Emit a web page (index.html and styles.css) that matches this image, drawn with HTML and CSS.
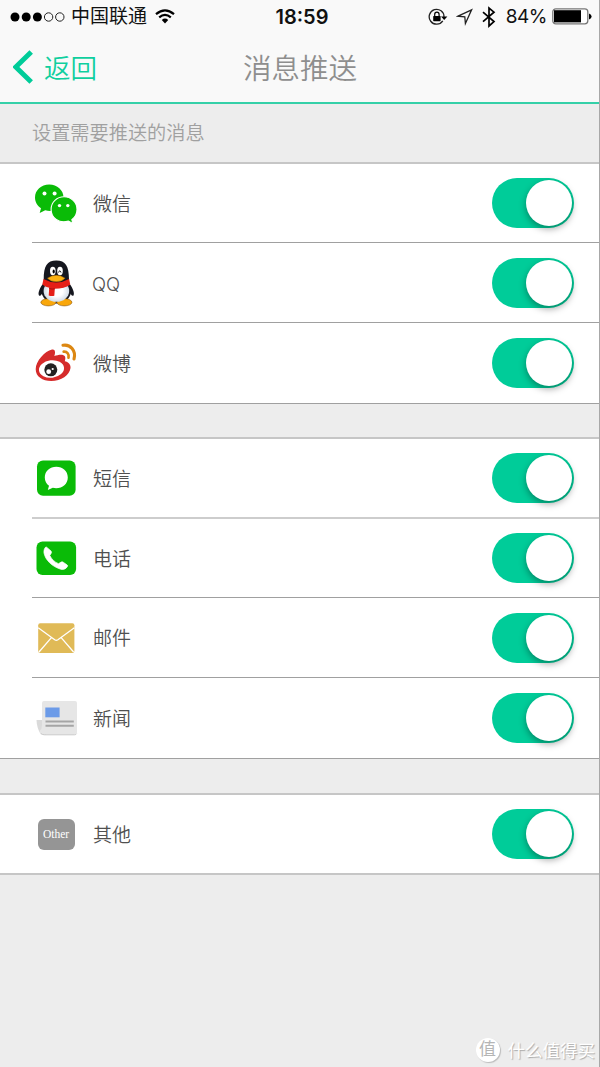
FILE: index.html
```html
<!DOCTYPE html>
<html lang="zh-CN">
<head>
<meta charset="UTF-8">
<title>消息推送</title>
<link rel="stylesheet" href="styles.css">
</head>
<body>
<div class="page">
    <div class="header">
        <div class="status">
            <div class="status-left">
                <svg class="signal" width="56" height="12" viewBox="0 0 56 12"><circle cx="5" cy="6" r="4.5"/><circle cx="16.2" cy="6" r="4.5"/><circle cx="27.4" cy="6" r="4.5"/><g fill="none" stroke="#222" stroke-width="1"><circle cx="38.6" cy="6" r="4.2"/><circle cx="49.8" cy="6" r="4.2"/></g></svg>
                <span class="carrier">中国联通</span>
                <svg class="wifi" width="20" height="15" viewBox="0 0 20 15"><g fill="none" stroke="#000" stroke-width="2.2"><path d="M1 5.2Q10-2.6 19 5.2"/><path d="M4.2 8.4Q10 3.4 15.8 8.4"/></g><path d="M6.8 11Q10 8.2 13.2 11L10 14.4z"/></svg>
            </div>
            <div class="time">18:59</div>
            <div class="status-right">
                <svg width="20" height="18" viewBox="0 0 20 18"><path d="M14.8 12.8A7.4 7.4 0 1 1 16 9" fill="none" stroke="#222" stroke-width="1.3"/><path d="M13 8.5h6.4L16.2 12z"/><rect x="5.2" y="8" width="7.4" height="5.2" rx=".6"/><path d="M6.7 8.2V6.4a2.2 2.2 0 0 1 4.4 0v1.8" fill="none" stroke="#000" stroke-width="1.2"/></svg>
                <svg class="locate" width="18" height="18" viewBox="0 0 18 18"><path d="M2 8.2L15.6 1.8L9.4 15.4L8.800 8.800z" fill="none" stroke="#222" stroke-width="1.3"/></svg>
                <svg class="bt" width="14" height="22" viewBox="0 0 14 22"><path d="M1 6.2L12 15.6L7 20V2L12 6.2L1 15.6" fill="none" stroke="#000" stroke-width="1.7"/></svg>
                <span class="percent">84%</span>
                <svg class="battery" width="40" height="17" viewBox="0 0 40 17"><rect x=".8" y=".8" width="35" height="15" rx="3" fill="#fff" stroke="#777" stroke-width="1.3"/><path d="M2 2.2h27v12.2H2z"/><path d="M37 5.500q2.600.800 2.600 3t-2.600 3z"/></svg>
            </div>
        </div>
        <div class="nav">
            <div class="back">
                <svg width="20" height="34" viewBox="0 0 20 34"><path d="M18.200 2L2.800 17L18.200 32" fill="none" stroke="#0c9" stroke-width="5"/></svg>
                <span>返回</span>
            </div>
            <h1>消息推送</h1>
        </div>
    </div>
    <div class="tip">设置需要推送的消息</div>

    <ul class="list list-social">
        <li>
            <svg class="icon" width="48" height="48" viewBox="0.800 0 48 48"><g fill="#0abb07"><path d="M18 5.600c-8 0-14.200 5.600-14.200 13 0 4.800 2.400 8.300 6 10.600L8.500 34l5.500-2.800c9.700 2.800 18.300-3.200 18.300-12.600 0-7.400-6.300-13-14.300-13z"/><path d="M32.800 17.800c-7 0-12.900 5.400-12.900 12.600 0 8.400 8 14.600 17.300 11.700l4.400 2.300-1-3.800c3.200-2.300 5.200-5.900 5.200-10.200 0-7.200-6-12.600-13-12.600z" stroke="#fff" stroke-width="1.1"/></g><g fill="#fff"><circle cx="13.300" cy="14.600" r="2"/><circle cx="23.400" cy="14.600" r="2"/><circle cx="28.300" cy="26.600" r="1.700"/><circle cx="36.600" cy="26.600" r="1.700"/></g></svg>
            <span>微信</span><i class="switch"></i>
        </li>
        <li>
            <svg class="icon" width="48" height="48" viewBox="0 0 48 48">
                <defs><radialGradient id="belly"><stop offset=".5" stop-color="#fff"/><stop offset="1" stop-color="#d3dde8"/></radialGradient></defs>
                <path d="M12.500 23C8 28 5.500 34 7 36.400c1.300 1.400 3-1.200 4.500-4.400M36 23c4.500 5 7 11 5.500 13.400-1.300 1.400-3-1.200-4.500-4.400" fill="#15171f"/>
                <ellipse cx="24.300" cy="31.500" rx="15" ry="13" fill="#15171f"/>
                <ellipse cx="16.400" cy="43.300" rx="7.500" ry="3.600" fill="#f9a70b" stroke="#8b5509" stroke-width=".6"/>
                <ellipse cx="32.400" cy="43.300" rx="7.500" ry="3.600" fill="#f9a70b" stroke="#8b5509" stroke-width=".6"/>
                <ellipse cx="24.400" cy="32" rx="12.800" ry="10.800" fill="url(#belly)"/>
                <path d="M11.700 20.500C11.700 7 15 1.500 24.300 1.500S37 7 37 20.500c0 6-5 8.500-12.700 8.500s-12.600-2.500-12.600-8.500z" fill="#15171f"/>
                <ellipse cx="20.800" cy="12" rx="2.800" ry="4.200" fill="#fff"/><ellipse cx="28" cy="12" rx="2.800" ry="4.200" fill="#fff"/>
                <ellipse cx="21.700" cy="12.500" rx="1.100" ry="1.900"/><path d="M26.600 13.500q1.200-3.500 2.400 0" fill="none" stroke="#111"/>
                <path d="M11.500 20q12.700 7 25.600 0l1.200 5.500q-6 4.300-15.500 4.300l-.5 7q-3 .7-5.600-.4l.5-7.600q-4.300-1-6.900-3.300z" fill="#e51f17"/><path d="M17.200 29.500q3 .9 5.600.3" fill="none" stroke="#a81212"/>
                <path d="M15.500 19.200q4-2.900 8.800-2.900t8.800 2.900q-3.300 3.500-8.800 3.500t-8.800-3.500z" fill="#fcb312" stroke="#a56508" stroke-width=".5"/>
            </svg>
            <span class="latin">QQ</span><i class="switch"></i>
        </li>
        <li>
            <svg class="icon" width="48" height="48" viewBox="0.500 0 48 48"><path d="M20.500 10.500c3.300-.8 3.700 3 2.300 6.600 4.300-1.700 9.500-2.200 10.700.4.700 1.500.2 3.200-.2 4.700 3.300.8 6.200 3 5.700 6.800C38.200 36 29.600 42 19.700 42 11 42 4.200 37.400 4.200 30.200c0-8 9.200-18.200 16.300-19.700z" fill="#d52b2b"/><ellipse cx="20" cy="30" rx="12.600" ry="8.700" transform="rotate(-7 20 30)" fill="#fff"/><circle cx="19.300" cy="30.800" r="6.500" fill="#222"/><circle cx="17.200" cy="32.700" r="2.400" fill="#fff"/><circle cx="21.200" cy="30" r="1.100" fill="#fff"/><g fill="none" stroke="#dc8712" stroke-linecap="round" stroke-width="3.100"><path d="M31.500 6.300c7.300-1.300 13.300 5.500 11 13.700"/><path d="M32.200 12.700c3.400-.3 5.600 2.500 4.800 6" stroke-width="2.700"/></g></svg>
            <span>微博</span><i class="switch"></i>
        </li>
    </ul>

    <ul class="list list-system">
        <li>
            <svg class="icon" width="48" height="48" viewBox="0 0 48 48"><rect x="5" y="6.500" width="38.600" height="35.200" rx="6" fill="#0abb07"/><path d="M24.300 12.800c-6.400 0-11.500 4.500-11.500 10.600 0 3.400 1.600 6.300 4.200 8.300L15.800 36l5-2.200c8 1.800 15-3 15-10.400 0-6.100-5.100-10.600-11.500-10.600z" fill="#fff"/></svg>
            <span>短信</span><i class="switch"></i>
        </li>
        <li>
            <svg class="icon" width="48" height="48" viewBox="0 0 48 48"><rect x="4.500" y="7.500" width="39.600" height="33.600" rx="6" fill="#0abb07"/><path d="M14.600 13.200L19 17q1 1.200.1 2.400l-1.300 2c1.700 3.800 5 6.800 8.700 8.300l2.600-1.600q1.100-.7 2.100.1l4 2.800q.8.800.1 1.700c-1.500 2.300-3.800 3.300-6.600 2.500C20.200 32.700 13.300 26 12 19c-.3-2.500.4-4.500 1.500-5.700q.5-.5 1.100-.1z" fill="#fff" stroke="#fff" stroke-width=".7"/></svg>
            <span>电话</span><i class="switch"></i>
        </li>
        <li>
            <svg class="icon" width="48" height="48" viewBox="0 0 48 48"><rect x="6.200" y="9.300" width="36.200" height="29.800" rx="2" fill="#e0ba57"/><path d="M6.200 13.800l16.500 12q1.600 1 3.200 0l16.500-12M7 38l12.200-14.200M41.600 38L29.400 23.800" fill="none" stroke="#fff" stroke-width="1.300"/></svg>
            <span>邮件</span><i class="switch"></i>
        </li>
        <li>
            <svg class="icon" width="48" height="48" viewBox="0 0 48 48"><path d="M10 26H4.500q.3 8 4.200 14.200L14 41z" fill="#dadada"/><path d="M12 7h31q2 0 2 2v29.500q0 2-2 2H12q-4 0-4.500-3.500Q10 35 10 31V9q0-2 2-2z" fill="#e6e6e6"/><path d="M9 39.500q1.300 1.300 3.500 1.300h30q1.500 0 2-1" fill="none" stroke="#c9c9c9"/><path d="M13.300 13.500h14.300v9.800H13.300z" fill="#6c9be8"/><path d="M13.500 27.400h28.300M13.500 31.700h28.300" stroke="#a5a5a5" stroke-width="2"/></svg>
            <span>新闻</span><i class="switch"></i>
        </li>
    </ul>

    <ul class="list list-other">
        <li>
            <div class="icon"><b class="other">Other</b></div>
            <span>其他</span><i class="switch"></i>
        </li>
    </ul>

    <div class="mark"><b>值</b><span>什么值得买</span></div>
</div>
</body>
</html>
```

FILE: styles.css
```css
*{margin:0;padding:0;box-sizing:border-box;}
body{
	background:#ededed;
	font-family:"Liberation Sans","Noto Sans CJK SC",sans-serif;
}
ul{list-style:none;}
svg{display:block;flex:none;}
.page{
	position:relative;
	width:600px;
	height:1067px;
	overflow:hidden;
	border-right:1px solid #a8a8a8;
	background:#ededed;
}
.header{
	height:104px;
	background:#f9f9f9;
	border-bottom:2px solid #35d0a8;
}
.status{
	display:grid;
	grid-template-columns:230px 1fr 230px;
	align-items:center;
	height:33px;
	padding:0 7px 0 10px;
	color:#111;
}
.status-left,.status-right{display:flex;align-items:center;}
.status-right{justify-content:flex-end;}
.carrier{margin-left:5px;padding-top:1px;font-size:19px;line-height:32px;}
.wifi{margin-left:8px;}
.time{
	padding:1px 0 0 2px;
	text-align:center;
	font:600 20px/32px Inter,sans-serif;
}
.locate{margin-left:8px;}
.bt{margin-left:8px;}
.percent{
	margin:0 5px 0 10px;
	padding-top:1px;
	font:400 19px/32px Inter,sans-serif;
	letter-spacing:-.5px;
}
.nav{
	display:grid;
	grid-template-columns:200px 200px 200px;
	align-items:center;
	height:68px;
}
.back{
	display:flex;
	align-items:center;
	padding-left:13px;
	color:#0fcf9f;
	font-size:26.500px;
	font-weight:350;
}
.back span{margin:-2px 0 0 11px;}
h1{
	margin-top:-2px;
	text-align:center;
	color:#8e8e8e;
	font-size:28.500px;
	font-weight:350;
}
.tip{
	height:58px;
	padding-left:32px;
	color:#a0a0a0;
	font-size:19.200px;
	font-weight:350;
	line-height:59px;
}
.list{
	display:grid;
	background:#fff;
	border-top:2px solid #c6c6c6;
	border-bottom:1px solid #a0a0a0;
}
.list li{
	display:flex;
	align-items:center;
	margin-left:32px;
	padding-right:25px;
	border-bottom:1px solid #a0a0a0;
}
.list li:last-child{border-bottom:0;}
.list-social{grid-template-rows:79px 80px 80px;}
.list-system{
	margin-top:33px;
	grid-template-rows:80px 79px 80px 80px;
}
.list-system li:first-child{border-bottom:2px solid #cdcdcd;}
.list-other{
	margin-top:34px;
	grid-template-rows:78px;
	border-bottom:2px solid #c6c6c6;
}
.list span{
	flex:1;
	margin:-2px 0 0 13px;
	color:#505050;
	font-size:19px;
	font-weight:350;
}
.list .latin{
	margin:2px 0 0 12px;
	font:300 18.500px Inter,sans-serif;
}
.icon{
	display:flex;
	align-items:center;
	justify-content:center;
	width:48px;
	height:48px;
}
.other{
	width:37px;
	height:31px;
	border-radius:6px;
	background:#959595;
	color:#fff;
	font:400 11.500px/31px "Liberation Serif",serif;
	text-align:center;
}
.switch{
	display:flex;
	justify-content:flex-end;
	width:82px;
	height:50px;
	padding:2px;
	border-radius:25px;
	background:#00cc99;
}
.switch:after{
	content:"";
	width:46px;
	height:46px;
	border-radius:50%;
	background:#fff;
	box-shadow:0 3px 7px rgba(0,0,0,.35);
}
.mark{
	position:absolute;
	right:4px;
	bottom:5px;
	display:flex;
	align-items:center;
	color:#fff;
	font-size:17.500px;
	text-shadow:1px 1px 1px #aaa;
}
.mark span{margin-top:-2px;}
.mark b{
	width:24px;
	height:24px;
	margin-right:8px;
	border-radius:50%;
	background:#fff;
	box-shadow:1px 1px 1px #bbb;
	color:#b5b5b5;
	font-size:17px;
	font-weight:400;
	line-height:23px;
	text-align:center;
	text-shadow:none;
}
```
